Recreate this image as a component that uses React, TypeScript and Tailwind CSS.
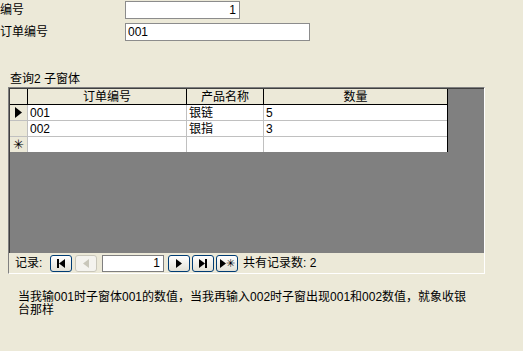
import React from 'react';

const FONT = "[font-family:'Liberation_Sans','Noto_Sans_CJK_SC',sans-serif]";

const rows = [
    { id: '001', name: '银链', qty: '5', current: true },
    { id: '002', name: '银指', qty: '3', current: false },
];

const NavButton: React.FC<{ disabled?: boolean; children: React.ReactNode }> = ({ disabled, children }) => (
    <div
        className={`w-[22px] h-[17px] rounded-[3px] border flex items-center justify-center ${disabled
            ? 'border-[#c9c7ba] bg-[#f4f3ee] text-[#c9c7ba]'
            : 'border-[#003c74] bg-gradient-to-b from-white to-[#e3e1d6] text-black'
            }`}
    >
        {children}
    </div>
);

const Tri: React.FC<{ dir: 'l' | 'r' }> = ({ dir }) => (
    <svg width="6" height="9" viewBox="0 0 6 9">
        {dir === 'r' ? <path d="M0 0 L6 4.5 L0 9 Z" fill="currentColor" /> : <path d="M6 0 L0 4.5 L6 9 Z" fill="currentColor" />}
    </svg>
);

const Bar = () => <div className="w-[2px] h-[9px] bg-current" />;

const App: React.FC = () => {
    return (
        <div className={`w-[523px] h-[351px] bg-[#ece9d8] text-black text-[12px] leading-[14px] overflow-hidden ${FONT}`}>
            {/* main form fields */}
            <div className="pt-[1px]">
                <div className="flex items-center h-[18px]">
                    <span className="w-[125px]">编号</span>
                    <div className="w-[115px] h-[18px] bg-white border border-[#8c8c8c] flex items-center justify-end pr-[3px]">1</div>
                </div>
                <div className="flex items-center h-[18px] mt-[4px]">
                    <span className="w-[125px]">订单编号</span>
                    <div className="w-[185px] h-[18px] bg-white border border-[#8c8c8c] flex items-center pl-[2px]">001</div>
                </div>
            </div>

            <div className="mt-[31px] pl-[10px] h-[15px]">查询2 子窗体</div>

            {/* subform */}
            <div className="ml-[8px] w-[477px] h-[187px] border-l border-t border-[#808080] border-r border-b border-r-white border-b-white flex flex-col">
                <div className="flex-1 bg-[#808080] border-l border-t border-[#404040]">
                    <div className="w-[438px] bg-white border-r border-black">
                        <div className="grid grid-cols-[18px_159px_77px_183px] h-[16px] bg-[#ece9d8] border-b border-black">
                            <div className="border-r border-black" />
                            <div className="border-r border-black flex items-center justify-center">订单编号</div>
                            <div className="border-r border-black flex items-center justify-center">产品名称</div>
                            <div className="flex items-center justify-center">数量</div>
                        </div>
                        {rows.map((r) => (
                            <div key={r.id} className="grid grid-cols-[18px_159px_77px_183px] h-[16px] border-b border-[#c0c0c0]">
                                <div className="bg-[#ece9d8] border-r border-[#c0c0c0] flex items-center justify-center">
                                    {r.current && <svg width="7" height="11" viewBox="0 0 7 11"><path d="M0 0 L7 5.5 L0 11 Z" fill="black" /></svg>}
                                </div>
                                <div className="border-r border-[#c0c0c0] flex items-center pl-[2px]">{r.id}</div>
                                <div className="border-r border-[#c0c0c0] flex items-center pl-[2px]">{r.name}</div>
                                <div className="flex items-center pl-[2px]">{r.qty}</div>
                            </div>
                        ))}
                        <div className="grid grid-cols-[18px_159px_77px_183px] h-[15px]">
                            <div className="bg-[#ece9d8] border-r border-[#c0c0c0] flex items-center justify-center text-[13px] leading-none">✳</div>
                            <div className="border-r border-[#c0c0c0]" />
                            <div className="border-r border-[#c0c0c0]" />
                            <div />
                        </div>
                    </div>
                </div>

                {/* navigation bar */}
                <div className="h-[20px] flex items-center pl-[6px]">
                    <span className="w-[35px]">记录:</span>
                    <div className="flex items-center gap-[3px]">
                        <NavButton><Bar /><Tri dir="l" /></NavButton>
                        <NavButton disabled><Tri dir="l" /></NavButton>
                    </div>
                    <div className="ml-[5px] w-[62px] h-[17px] bg-white border border-[#7f7f7f] flex items-center justify-end pr-[3px]">1</div>
                    <div className="ml-[4px] flex items-center gap-[2px]">
                        <NavButton><Tri dir="r" /></NavButton>
                        <NavButton><Tri dir="r" /><Bar /></NavButton>
                        <NavButton><Tri dir="r" /><span className="text-[11px] leading-none">✳</span></NavButton>
                    </div>
                    <span className="ml-[5px]">共有记录数: 2</span>
                </div>
            </div>

            <div className="mt-[17px] pl-[18px] leading-[13px]">
                <div>当我输001时子窗体001的数值，当我再输入002时子窗出现001和002数值，就象收银</div>
                <div>台那样</div>
            </div>
        </div>
    );
};

export default App;
